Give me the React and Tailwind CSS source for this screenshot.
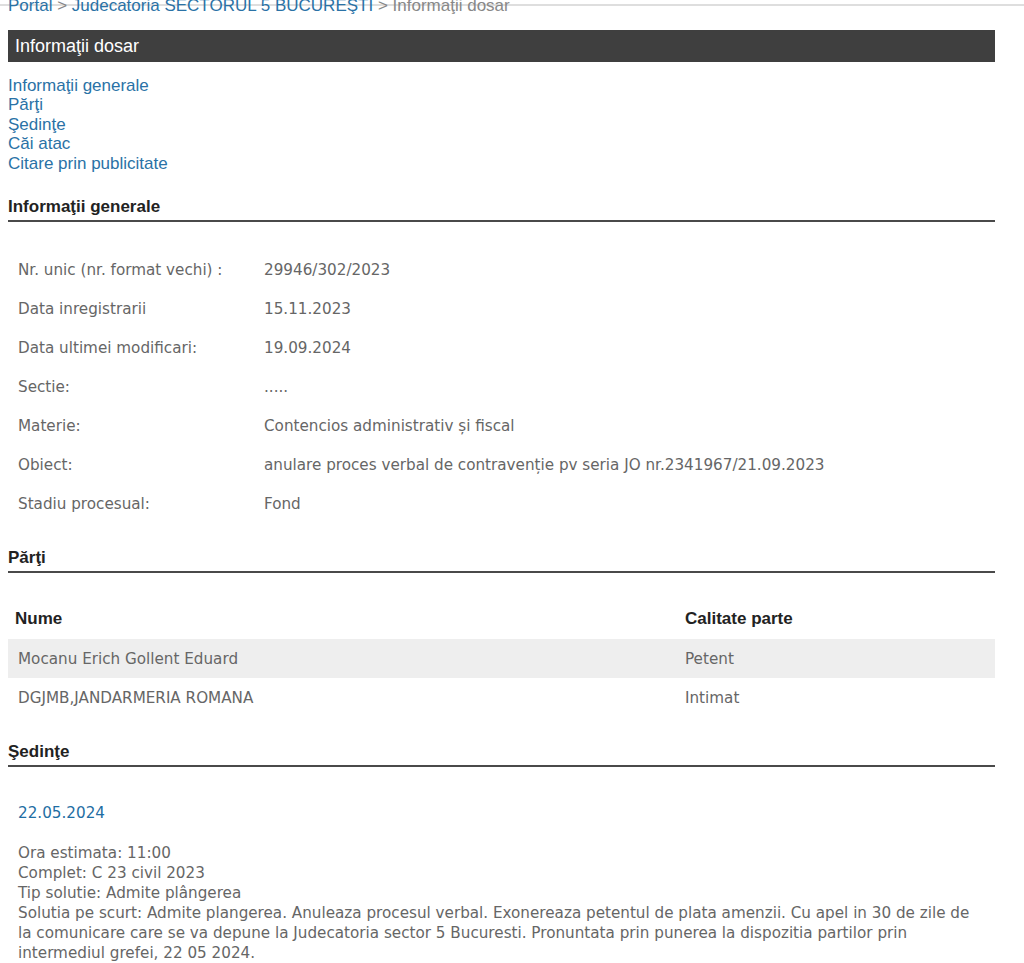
const generalRows = [
  ['Nr. unic (nr. format vechi) :', '29946/302/2023'],
  ['Data inregistrarii', '15.11.2023'],
  ['Data ultimei modificari:', '19.09.2024'],
  ['Sectie:', '.....'],
  ['Materie:', 'Contencios administrativ și fiscal'],
  ['Obiect:', 'anulare proces verbal de contravenție pv seria JO nr.2341967/21.09.2023'],
  ['Stadiu procesual:', 'Fond'],
];

const parti = [
  ['Mocanu Erich Gollent Eduard', 'Petent'],
  ['DGJMB,JANDARMERIA ROMANA', 'Intimat'],
];

const links = [
  'Informaţii generale',
  'Părţi',
  'Şedinţe',
  'Căi atac',
  'Citare prin publicitate',
];

function SectionTitle({ children, className = '' }) {
  return (
    <div
      className={`text-[17px] font-bold leading-[20px] text-[#222] pb-[3px] border-b-2 border-[#4a4a4a] ${className}`}
    >
      {children}
    </div>
  );
}

export default function App() {
  return (
    <div className="relative min-h-screen bg-white overflow-hidden font-['Liberation_Sans',Arial,sans-serif]">
      <div className="absolute inset-x-0 top-[4px] h-[2px] bg-[#dedede]" />

      <div className="pl-[8px] pr-[29px]">
        <div className="relative mt-[-3px] text-[17px] leading-[17px] whitespace-nowrap text-[#888]">
          <span className="text-[#2a72a6]">Portal</span>
          {' > '}
          <span className="text-[#2a72a6]">Judecatoria SECTORUL 5 BUCUREŞTI</span>
          {' > Informaţii dosar'}
        </div>

        <div className="mt-[16px] h-[32px] flex items-center pl-[7px] bg-[#3f3f3f] text-white text-[18px]">
          Informaţii dosar
        </div>

        <div className="mt-[13.5px] flex flex-col items-start text-[17px] leading-[19.5px] text-[#2a72a6]">
          {links.map((l) => (
            <a key={l} href="#" className="hover:underline">
              {l}
            </a>
          ))}
        </div>

        <SectionTitle className="mt-[24px]">Informaţii generale</SectionTitle>

        <div className="mt-[27.5px] font-['DejaVu_Sans',Verdana,sans-serif] text-[15.2px] text-[#666]">
          {generalRows.map(([label, value]) => (
            <div key={label} className="h-[39px] pt-[3px] flex items-center">
              <div className="w-[256px] shrink-0 pl-[10px]">{label}</div>
              <div>{value}</div>
            </div>
          ))}
        </div>

        <SectionTitle className="mt-[25px]">Părţi</SectionTitle>

        <div className="mt-[27px]">
          <div className="h-[39px] flex items-center text-[17px] font-bold text-[#222]">
            <div className="w-[677px] shrink-0 pl-[7px]">Nume</div>
            <div>Calitate parte</div>
          </div>
          {parti.map(([name, role], i) => (
            <div
              key={name}
              className={`h-[39px] pt-[3px] flex items-center font-['DejaVu_Sans',Verdana,sans-serif] text-[15.2px] text-[#666] ${
                i === 0 ? 'bg-[#eeeeee]' : ''
              }`}
            >
              <div className="w-[677px] shrink-0 pl-[10px]">{name}</div>
              <div>{role}</div>
            </div>
          ))}
        </div>

        <SectionTitle className="mt-[25px]">Şedinţe</SectionTitle>

        <div className="pl-[10px] pr-[17px] font-['DejaVu_Sans',Verdana,sans-serif] text-[15.2px] leading-[20px]">
          <div className="mt-[36px] text-[#1f6ea3]">22.05.2024</div>
          <div className="mt-[20px] text-[#666]">
            Ora estimata: 11:00
            <br />
            Complet: C 23 civil 2023
            <br />
            Tip solutie: Admite plângerea
            <br />
            Solutia pe scurt: Admite plangerea. Anuleaza procesul verbal. Exonereaza petentul de plata amenzii. Cu apel in 30 de zile de la comunicare care se va depune la Judecatoria sector 5 Bucuresti. Pronuntata prin punerea la dispozitia partilor prin intermediul grefei, 22 05 2024.
          </div>
        </div>
      </div>
    </div>
  );
}
